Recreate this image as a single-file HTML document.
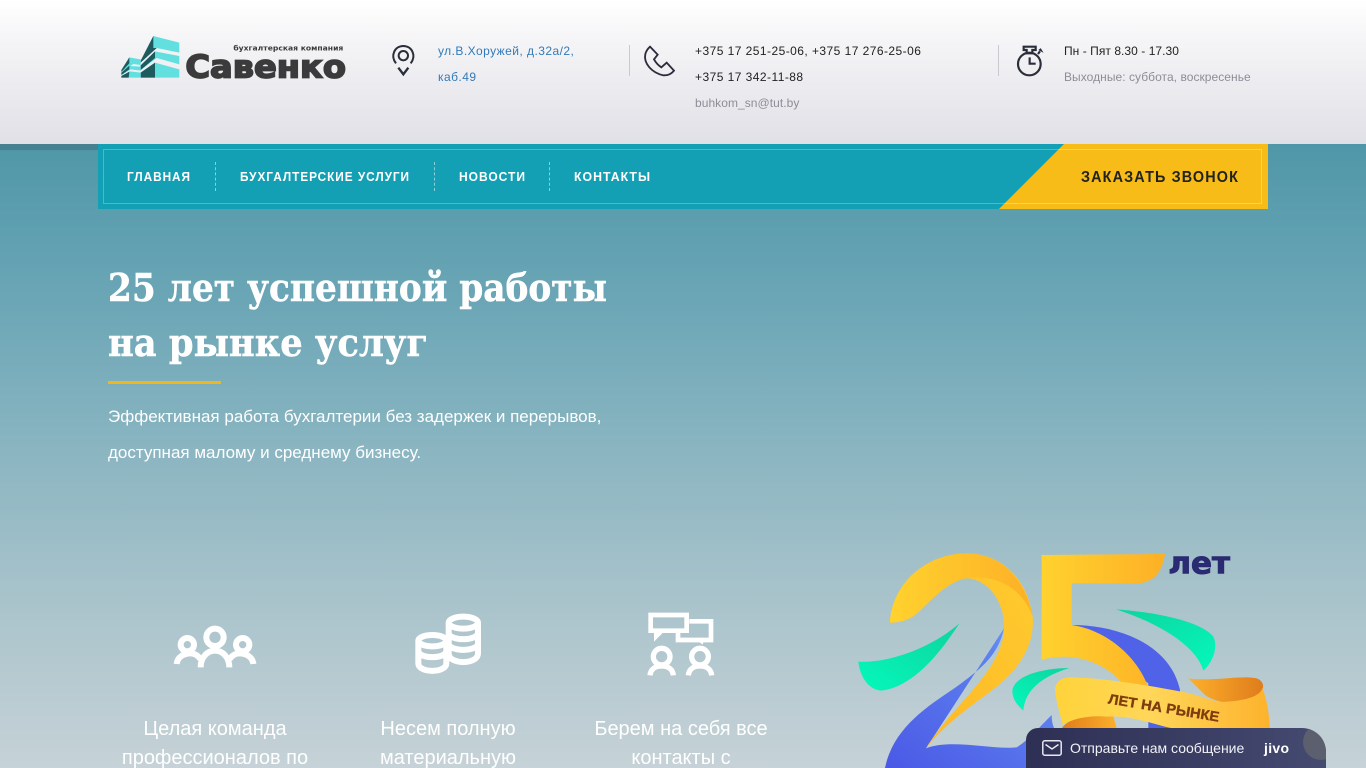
<!DOCTYPE html>
<html lang="ru"><head><meta charset="utf-8"><title>Савенко</title>
<style>
html,body{margin:0;padding:0;width:1366px;height:768px;overflow:hidden;background:#c6d2d7}
#w{position:relative;width:1366px;height:768px;overflow:hidden;font-family:"Liberation Sans",sans-serif;background:linear-gradient(180deg,#4f97a8 144px,#6ba6b6 300px,#8ab5c1 450px,#a9c3cb 600px,#c6d2d7 768px)}
.a{position:absolute;white-space:nowrap}
.s{font-size:12px;line-height:26px;letter-spacing:.45px;color:#222}
.g{color:#8d8d98}
.d{position:absolute;top:162px;height:29px;border-left:1px dashed rgba(255,255,255,.5)}
.v{position:absolute;top:45px;height:31px;width:1px;background:#c9c9cf}
.p{left:108px;font-size:17px;line-height:36px;color:#fff}
.t{font-size:20px;line-height:29px;color:#fff;text-align:center;width:240px}
svg{position:absolute;display:block;overflow:visible}
</style></head><body><div id="w">
<div class="a" style="left:0;top:0;width:1366px;height:144px;background:linear-gradient(180deg,#fff 0,#f5f5f7 40px,#e0e0e7 144px)"></div>
<div class="a" style="left:0;top:144px;width:98px;height:6px;background:#47808f"></div>

<svg style="left:100px;top:20px" width="300" height="80" viewBox="0 0 900 240">
<polygon points="160,48 238,68 238,98 170,84 132,118 122,125" fill="#62e0e0"/>
<polygon points="160,48 122,122 122,128 170,84 160,84" fill="#1e5b5e"/>
<polygon points="165,94 238,108 238,133 170,114 122,150 122,136" fill="#62e0e0"/>
<polygon points="165,94 122,136 122,150 165,114" fill="#1e5b5e"/>
<polygon points="165,128 238,148 238,173 122,173 122,158" fill="#62e0e0"/>
<polygon points="165,128 122,158 122,173 165,173" fill="#1e5b5e"/>
<polygon points="88,112 122,118 122,135 100,132 64,156" fill="#62e0e0"/>
<polygon points="88,138 122,140 122,152 92,148 64,166" fill="#62e0e0"/>
<polygon points="90,154 122,158 122,173 64,173" fill="#62e0e0"/>
<polygon points="88,112 64,150 64,156 88,130" fill="#1e5b5e"/>
<polygon points="88,137 64,158 64,165 88,148" fill="#1e5b5e"/>
<polygon points="88,155 64,168 64,173 86,173" fill="#1e5b5e"/>
<text x="400" y="92" textLength="330" lengthAdjust="spacingAndGlyphs" font-family="DejaVu Sans" font-weight="bold" font-size="22" fill="#3a3a3a">бухгалтерская компания</text>
<text x="256" y="172" textLength="482" lengthAdjust="spacingAndGlyphs" font-family="DejaVu Sans" font-weight="bold" font-size="94" fill="#3b3b3b" stroke="#3b3b3b" stroke-width="5">Савенко</text>
</svg>

<svg style="left:380px;top:35px" width="60" height="50" viewBox="0 0 180 150" fill="none" stroke="#2a2d3a" stroke-width="6">
<circle cx="70" cy="62" r="14"/>
<path d="M48 85C30 62 44 33 70 33S110 62 92 85"/>
<path d="M55 98L70 118L85 98" stroke-width="7"/>
</svg>
<div class="a s" style="left:438px;top:38px;color:#337ab7">ул.В.Хоружей, д.32а/2,<br>каб.49</div>

<div class="v" style="left:629px"></div>
<svg style="left:620px;top:30px" width="100" height="60" viewBox="0 0 300 180" fill="none" stroke="#2a2d3a" stroke-width="5.5">
<path d="M90 50L113 74L102 88Q110 103 124 112L140 98L162 122Q150 137 130 136C95 128 70 100 76 72Q79 60 90 50Z"/>
</svg>
<div class="a s" style="left:695px;top:38px">+375 17 251-25-06, +375 17 276-25-06<br>+375 17 342-11-88<br><span class="g" style="letter-spacing:.05px">buhkom_sn@tut.by</span></div>

<div class="v" style="left:998px"></div>
<svg style="left:990px;top:30px" width="80" height="60" viewBox="0 0 240 180" fill="none" stroke="#2a2d3a" stroke-width="6.5">
<circle cx="118" cy="102" r="34"/>
<path d="M101 50H137V60H127V70H110V60H101Z"/>
<path d="M119 82V101H137"/>
<path d="M144 72L150 64"/>
<path d="M147 60L158 66L152 56Z" fill="#2a2d3a" stroke-width="2"/>
</svg>
<div class="a s" style="left:1064px;top:38px;letter-spacing:.05px">Пн - Пят 8.30 - 17.30<br><span class="g">Выходные: суббота, воскресенье</span></div>

<div class="a" style="left:98px;top:144px;width:1170px;height:65px;background:#14a0b4"></div>
<div class="a" style="left:103px;top:149px;width:1157px;height:53px;border:1px solid rgba(255,255,255,.25)"></div>
<svg style="left:0;top:0" width="1366" height="768"><polygon points="1064,144 1268,144 1268,209 999,209" fill="#f7bc18"/><path d="M1059 149.5H1261.5V203.5H1005" fill="none" stroke="#fbd25e" stroke-width="1"/>
<g font-family="Liberation Sans" font-weight="bold" font-size="13" fill="#fff" letter-spacing="1.05">
<text x="127" y="181" textLength="64" lengthAdjust="spacingAndGlyphs">ГЛАВНАЯ</text>
<text x="240" y="181" textLength="170" lengthAdjust="spacingAndGlyphs">БУХГАЛТЕРСКИЕ УСЛУГИ</text>
<text x="459" y="181" textLength="67" lengthAdjust="spacingAndGlyphs">НОВОСТИ</text>
<text x="574" y="181" textLength="77" lengthAdjust="spacingAndGlyphs">КОНТАКТЫ</text>
</g>
<text x="1081" y="182" textLength="158" lengthAdjust="spacingAndGlyphs" letter-spacing="1.25" font-family="Liberation Sans" font-weight="bold" font-size="16" fill="#22221e">ЗАКАЗАТЬ ЗВОНОК</text>
</svg>
<div class="d" style="left:215px"></div>
<div class="d" style="left:434px"></div>
<div class="d" style="left:549px"></div>

<svg style="left:108px;top:260px" width="510" height="110">
<g font-family="DejaVu Serif" font-weight="bold" font-size="38" fill="#fff" stroke="#fff" stroke-width=".5">
<text x="0" y="41" textLength="499" lengthAdjust="spacingAndGlyphs">25 лет успешной работы</text>
<text x="0" y="96" textLength="320" lengthAdjust="spacingAndGlyphs">на рынке услуг</text>
</g></svg>
<div class="a" style="left:108px;top:381px;width:113px;height:3px;background:#f0b61e"></div>
<div class="a p" style="top:399px">Эффективная работа бухгалтерии без задержек и перерывов,<br>доступная малому и среднему бизнесу.</div>

<svg style="left:160px;top:600px" width="340" height="85" viewBox="0 0 1020 255" fill="none" stroke="#fff" stroke-width="18">
<circle cx="165" cy="112" r="26"/><circle cx="82" cy="134" r="20"/><circle cx="248" cy="134" r="20"/>
<path d="M122 202C122 172 142 152 165 152S208 172 208 202"/>
<path d="M50 192C52 172 70 160 92 160C105 160 115 168 122 178"/>
<path d="M280 192C278 172 260 160 238 160C225 160 215 168 208 178"/>
<ellipse cx="910" cy="68" rx="44" ry="18"/>
<path d="M866 68V160C866 195 954 195 954 160V68M866 98C866 124 954 124 954 98M866 130C866 156 954 156 954 130"/>
<ellipse cx="817" cy="122" rx="42" ry="17" fill="#aec6ce"/>
<path d="M775 122V190C775 220 859 220 859 190V122M775 152C775 178 859 178 859 152" fill="none"/>
</svg>
<svg style="left:630px;top:600px" width="100" height="85" viewBox="0 0 300 255" fill="none" stroke="#fff" stroke-width="14">
<path d="M62 45H170V92H62Z"/>
<polygon points="72,92 105,92 72,125" fill="#fff" stroke="none"/>
<path d="M178 64H243V120H144V98"/>
<polygon points="200,120 222,120 218,134" fill="#fff" stroke="none"/>
<g stroke-width="16"><circle cx="95" cy="170" r="25"/><circle cx="210" cy="170" r="25"/>
<path d="M60 226C62 206 78 198 95 198S128 206 130 226"/>
<path d="M175 226C177 206 193 198 210 198S243 206 245 226"/></g>
</svg>
<div class="a t" style="left:95px;top:715px">Целая команда<br>профессионалов по</div>
<div class="a t" style="left:328px;top:715px">Несем полную<br>материальную</div>
<div class="a t" style="left:561px;top:715px">Берем на себя все<br>контакты с</div>

<svg style="left:850px;top:540px" width="430" height="228" viewBox="0 0 1290 684">
<defs>
<linearGradient id="y1" x1="0" y1="0" x2="1" y2="0"><stop offset="0" stop-color="#ffd22e"/><stop offset="1" stop-color="#fdb026"/></linearGradient>
<linearGradient id="y2" x1="0" y1="1" x2="1" y2="0"><stop offset="0" stop-color="#fdb526"/><stop offset="1" stop-color="#ffcc2e"/></linearGradient>
<linearGradient id="b1" x1="0" y1="1" x2="1" y2="0"><stop offset="0" stop-color="#4a58e6"/><stop offset=".7" stop-color="#5e82ef"/><stop offset="1" stop-color="#74aaf8"/></linearGradient>
<linearGradient id="gr" x1="0" y1="1" x2="1" y2="0"><stop offset="0" stop-color="#05f8bc"/><stop offset="1" stop-color="#0dd49d"/></linearGradient>
<linearGradient id="gr2" x1="1" y1="1" x2="0" y2="0"><stop offset="0" stop-color="#05f8bc"/><stop offset="1" stop-color="#0dd49d"/></linearGradient>
<linearGradient id="or" x1="0" y1="0" x2="1" y2="0"><stop offset="0" stop-color="#fdb02a"/><stop offset="1" stop-color="#df7c1c"/></linearGradient>
<linearGradient id="or2" x1="0" y1="0" x2="1" y2="0"><stop offset="0" stop-color="#df7c1c"/><stop offset="1" stop-color="#fdb02a"/></linearGradient>
<linearGradient id="rb" x1="0" y1="0" x2="1" y2="0"><stop offset="0" stop-color="#ffd33a"/><stop offset=".45" stop-color="#ffd659"/><stop offset="1" stop-color="#fdb22c"/></linearGradient>
</defs>
<path d="M462 265C445 345 395 385 320 440C240 495 130 560 105 684H660V600C625 590 605 570 605 525C570 560 530 605 500 622C430 630 300 595 228 625Z" fill="url(#b1)"/>
<path d="M120 248C125 130 230 40 350 40C450 40 530 110 548 230C555 310 510 385 440 440C370 495 290 545 228 625C300 505 460 390 462 265C466 190 415 112 340 115C270 125 240 190 195 225C170 243 145 248 120 248Z" fill="url(#y2)"/>
<path d="M120 248C125 130 230 40 350 40C450 40 525 110 548 230C520 150 450 110 370 112C290 115 240 190 195 225C170 243 145 248 120 248Z" fill="url(#y1)"/>
<path d="M25 365C120 370 250 320 328 250C270 340 190 440 95 452C55 450 30 410 25 365Z" fill="url(#gr)"/>
<path d="M665 255C800 255 960 310 990 450V600H895V430Z" fill="#4f62e8"/>
<path d="M575 45L945 42C935 100 910 128 860 130H665V255C770 270 860 350 892 435L840 470C810 390 690 325 575 360Z" fill="url(#y1)"/>
<path d="M798 208C900 215 1050 240 1090 290C1105 320 1090 365 1060 392C1040 320 930 250 798 208Z" fill="url(#gr2)"/>
<path d="M658 384C590 385 505 400 488 445C483 470 500 495 520 512C525 450 575 410 658 384Z" fill="url(#gr)"/>
<path d="M1015 415C1090 425 1170 405 1220 415C1235 420 1243 435 1238 445L1210 490H1130C1095 480 1075 475 1060 460Z" fill="url(#or)"/>
<path d="M635 565C660 525 760 515 790 530L802 570Z" fill="url(#or2)"/>
<path d="M615 450C617 420 640 410 670 412C770 415 890 435 1020 460C1060 470 1100 490 1130 485C1170 482 1225 475 1238 445C1250 480 1258 520 1260 570V600H1010L970 565C930 560 850 525 770 530C720 525 670 535 638 555C630 520 617 480 615 450Z" fill="url(#rb)"/>
<text x="0" y="0" transform="translate(773 490) rotate(9.4)" font-family="Liberation Sans" font-weight="bold" font-size="42" fill="#7e3d0e" stroke="#7e3d0e" stroke-width="1" textLength="337" lengthAdjust="spacingAndGlyphs">ЛЕТ НА РЫНКЕ</text>
<text x="955" y="100" font-family="DejaVu Sans" font-weight="bold" font-size="92" fill="#2a2b72" stroke="#2a2b72" stroke-width="3" textLength="185" lengthAdjust="spacingAndGlyphs">лет</text>
</svg>

<div class="a" style="left:1026px;top:728px;width:300px;height:40px;border-radius:12px 24px 0 0;overflow:hidden;background:linear-gradient(90deg,#2e2f54,#454a70)">
<div class="a" style="left:277px;top:-4px;width:36px;height:36px;border-radius:50%;background:#5c5f6e"></div>
<svg style="left:16px;top:12px" width="20" height="17" viewBox="0 0 20 17" fill="none" stroke="#e8e8ee" stroke-width="1.5"><rect x=".8" y=".8" width="18.4" height="14.4" rx="2"/><path d="M3.5 4.5L10 9L16.5 4.5"/></svg>
<div class="a" style="left:44px;top:11px;font-size:14px;line-height:18px;color:#f2f2f6">Отправьте нам сообщение</div>
<div class="a" style="left:238px;top:12px;font-size:14px;line-height:16px;font-weight:bold;letter-spacing:.3px;color:#fff">jivo</div>
</div>
</div></body></html>
